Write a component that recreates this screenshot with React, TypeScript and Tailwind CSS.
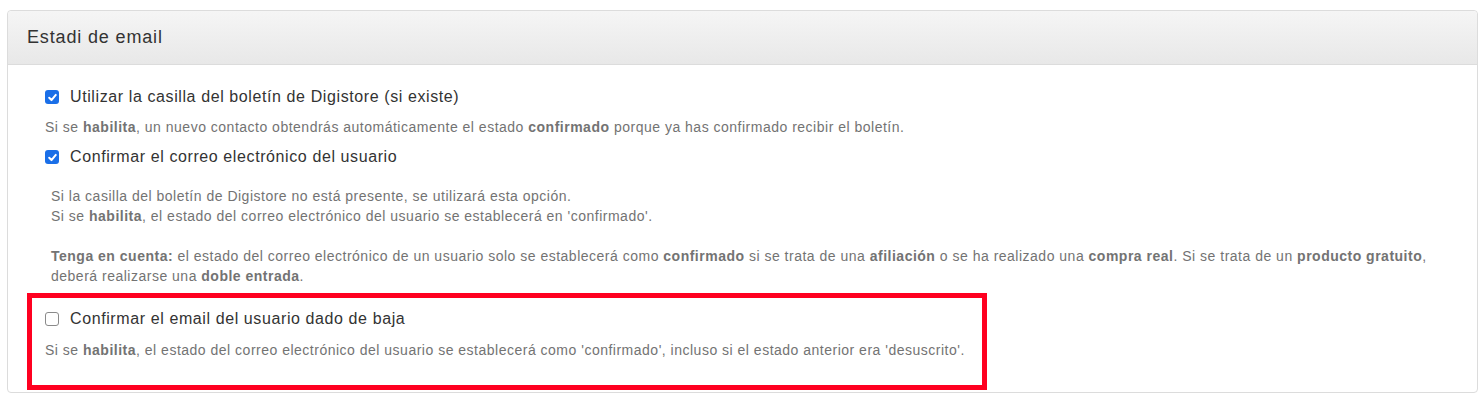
import type { ReactNode } from "react";

function Box({ checked }: { checked: boolean }) {
  if (checked) {
    return (
      <span className="flex h-[14px] w-[14px] shrink-0 items-center justify-center rounded-[3px] bg-[#1a6fe8]">
        <svg viewBox="0 0 12 12" className="h-[11px] w-[11px]">
          <path d="M2.4 6.3 L4.9 8.8 L9.6 3.2" fill="none" stroke="#fff" strokeWidth="2.2" strokeLinecap="round" strokeLinejoin="round" />
        </svg>
      </span>
    );
  }
  return <span className="h-[14px] w-[14px] shrink-0 rounded-[3px] border border-[#8a8a8a] bg-white" />;
}

function Row({ checked, children }: { checked: boolean; children: ReactNode }) {
  return (
    <label className="flex h-5 items-center gap-[11px] text-[16px] tracking-[0.6px] text-[#333]">
      <Box checked={checked} />
      <span>{children}</span>
    </label>
  );
}

function Help({ children, className = "" }: { children: ReactNode; className?: string }) {
  return <p className={`text-[14px] leading-5 tracking-[0.5px] text-[#737373] ${className}`}>{children}</p>;
}

export default function App() {
  return (
    <div className="min-h-screen bg-white pl-[7px] pr-[2px] pt-[10px] font-['Liberation_Sans',Arial,sans-serif]">
      <div className="rounded-[4px] border border-[#dcdcdc]">
        <div className="flex h-[54px] items-center rounded-t-[4px] border-b border-[#dcdcdc] bg-gradient-to-b from-[#f5f5f5] to-[#e8e8e8] px-[19px] text-[18px] tracking-[0.85px] text-[#333]">
          Estadi de email
        </div>
        <div className="pb-[2px] pl-[19px] pt-[22px]">
          <div className="pl-[18px]">
            <Row checked>Utilizar la casilla del boletín de Digistore (si existe)</Row>
            <Help className="mt-[10px]">
              Si se <b>habilita</b>, un nuevo contacto obtendrás automáticamente el estado <b>confirmado</b> porque ya has confirmado recibir el boletín.
            </Help>
            <div className="mt-[10px]">
              <Row checked>Confirmar el correo electrónico del usuario</Row>
            </div>
            <Help className="mt-[19px] pl-[6px] pr-[40px]">
              Si la casilla del boletín de Digistore no está presente, se utilizará esta opción.
              <br />
              Si se <b>habilita</b>, el estado del correo electrónico del usuario se establecerá en 'confirmado'.
              <br />
              <br />
              <b>Tenga en cuenta:</b> el estado del correo electrónico de un usuario solo se establecerá como <b>confirmado</b> si se trata de una <b>afiliación</b> o se ha realizado una <b>compra real</b>. Si se trata de un <b>producto gratuito</b>, deberá realizarse una <b>doble entrada</b>.
            </Help>
          </div>
          <div className="mt-[7px] w-[960px] border-[5px] border-[#ff0020] pb-[25px] pl-[13px] pt-[11px]">
            <Row checked={false}>Confirmar el email del usuario dado de baja</Row>
            <Help className="mt-[11px]">
              Si se <b>habilita</b>, el estado del correo electrónico del usuario se establecerá como 'confirmado', incluso si el estado anterior era 'desuscrito'.
            </Help>
          </div>
        </div>
      </div>
    </div>
  );
}
